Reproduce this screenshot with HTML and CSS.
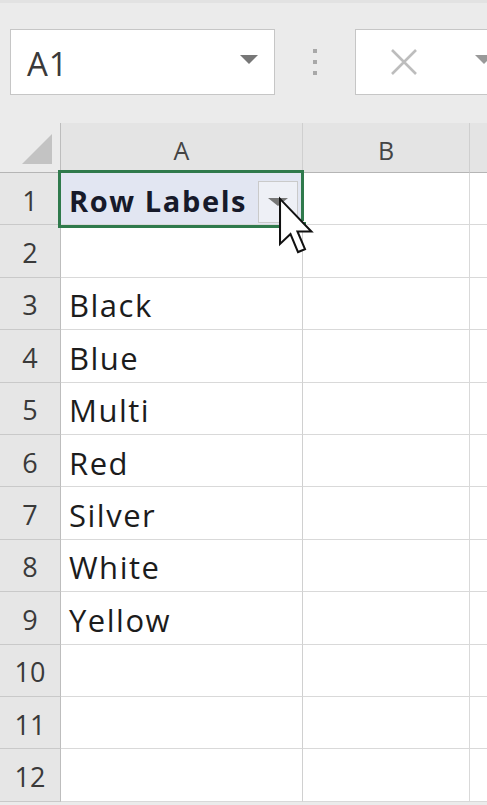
FILE: index.html
```html
<!DOCTYPE html>
<html>
<head>
<meta charset="utf-8">
<link rel="stylesheet" href="styles.css">
</head>
<body>
<div class="toolbar">
  <div class="namebox">
    <span class="ref">A1</span>
    <span class="caret"></span>
  </div>
  <div class="dots"><i></i><i></i><i></i></div>
  <div class="fbox">
    <svg class="xicon" width="30" height="28" viewBox="0 0 30 28"><path d="M3 2 L27 26 M27 2 L3 26" stroke="#bdbdbd" stroke-width="2.6" fill="none"/></svg>
    <span class="caret small"></span>
  </div>
</div>
<div class="sheet">
  <div class="corner"><span class="tri"></span></div>
  <div class="colh">A</div>
  <div class="colh">B</div>
  <div class="colh last"></div>

  <div class="rowh">1</div>
  <div class="cell a1"><b>Row Labels</b><span class="dd"><span class="ddtri"></span></span><span class="sel"><span class="handle"></span></span></div>
  <div class="cell"></div><div class="cell last"></div>

  <div class="rowh">2</div><div class="cell a"></div><div class="cell"></div><div class="cell last"></div>
  <div class="rowh">3</div><div class="cell a">Black</div><div class="cell"></div><div class="cell last"></div>
  <div class="rowh">4</div><div class="cell a">Blue</div><div class="cell"></div><div class="cell last"></div>
  <div class="rowh">5</div><div class="cell a">Multi</div><div class="cell"></div><div class="cell last"></div>
  <div class="rowh">6</div><div class="cell a">Red</div><div class="cell"></div><div class="cell last"></div>
  <div class="rowh">7</div><div class="cell a">Silver</div><div class="cell"></div><div class="cell last"></div>
  <div class="rowh">8</div><div class="cell a">White</div><div class="cell"></div><div class="cell last"></div>
  <div class="rowh">9</div><div class="cell a">Yellow</div><div class="cell"></div><div class="cell last"></div>
  <div class="rowh">10</div><div class="cell a"></div><div class="cell"></div><div class="cell last"></div>
  <div class="rowh">11</div><div class="cell a"></div><div class="cell"></div><div class="cell last"></div>
  <div class="rowh">12</div><div class="cell a"></div><div class="cell"></div><div class="cell last"></div>
</div>
<svg class="cursor" width="38" height="61" viewBox="0 0 13 21">
  <path d="M1 1 L1 16.5 L4.6 13.1 L7.2 19.3 L9.6 18.3 L7 12.2 L11.8 12.2 Z" fill="#fff" stroke="#111" stroke-width="0.7" stroke-linejoin="miter"/>
</svg>
</body>
</html>
```
FILE: styles.css
```css
html, body {
  margin: 0;
  padding: 0;
}
body {
  width: 487px;
  height: 805px;
  overflow: hidden;
  background: #ebebeb;
  font-family: "Open Sans", "Liberation Sans", sans-serif;
  position: relative;
}
.toolbar {
  height: 123px;
  box-sizing: border-box;
  padding-top: 26px;
  padding-left: 10px;
  display: flex;
  align-items: flex-start;
  background: #ebebeb;
  border-top: 3px solid #e2e2e2;
}
.namebox {
  width: 265px;
  height: 66px;
  box-sizing: border-box;
  background: #fff;
  border: 1.5px solid #c6c6c6;
  display: flex;
  align-items: center;
  padding-left: 16px;
  padding-right: 16px;
}
.ref {
  font-size: 33px;
  letter-spacing: 1px;
  color: #3a3a3a;
  flex: 1;
  line-height: 1;
  padding-top: 2px;
}
.caret {
  width: 0;
  height: 0;
  border-left: 9px solid transparent;
  border-right: 9px solid transparent;
  border-top: 9px solid #777;
  margin-top: -6px;
}
.caret.small {
  margin-left: auto;
  margin-right: -6px;
  border-top-color: #999;
}
.dots {
  width: 80px;
  height: 66px;
  display: flex;
  flex-direction: column;
  align-items: center;
  justify-content: center;
  gap: 7px;
}
.dots i {
  display: block;
  width: 4px;
  height: 4px;
  background: #a8a8a8;
}
.fbox {
  flex: 1;
  height: 66px;
  box-sizing: border-box;
  background: #fff;
  border: 1.5px solid #c6c6c6;
  border-right: none;
  display: flex;
  align-items: center;
  padding-left: 33px;
}
.sheet {
  display: grid;
  grid-template-columns: 61px 242px 167px 17px;
  grid-template-rows: 50px repeat(12, 52.4px);
  background: #fff;
}
.corner {
  background: #ebebeb;
  border-right: 1.5px solid #bdbdbd;
  border-bottom: 1.5px solid #b5b5b5;
  position: relative;
}
.tri {
  position: absolute;
  right: 8px;
  bottom: 8px;
  width: 0;
  height: 0;
  border-left: 30px solid transparent;
  border-bottom: 30px solid #c3c3c3;
}
.colh {
  background: #e4e4e4;
  border-right: 1.5px solid #cfcfcf;
  border-bottom: 1.5px solid #b5b5b5;
  display: flex;
  align-items: center;
  justify-content: center;
  font-size: 25px;
  color: #444;
  padding-top: 4px;
  box-sizing: border-box;
}
.colh.last { border-right: none; }
.rowh {
  background: #e6e6e6;
  border-right: 1.5px solid #bdbdbd;
  border-bottom: 1.5px solid #c9c9c9;
  display: flex;
  align-items: center;
  justify-content: center;
  font-size: 27px;
  color: #3a3a3a;
  padding-top: 3px;
  box-sizing: border-box;
}
.cell {
  border-right: 1.5px solid #d9d9d9;
  border-bottom: 1.5px solid #d9d9d9;
  box-sizing: border-box;
  display: flex;
  align-items: center;
  padding-left: 8px;
  padding-top: 4px;
  font-size: 31px;
  color: #1c1c1c;
  letter-spacing: 1.5px;
}
.cell.a { border-right: 1.5px solid #d0d0d0; }
.cell.last { border-right: none; }
.a1 {
  position: relative;
  background: #e2e6f2;
  color: #171a2a;
}
.a1 b {
  font-weight: 700;
  letter-spacing: 1.6px;
  font-size: 29px;
}
.dd {
  position: absolute;
  right: 4px;
  top: 8px;
  width: 40px;
  height: 42px;
  box-sizing: border-box;
  border: 1.5px solid #cacaca;
  background: #eef0f6;
  display: flex;
  align-items: center;
  justify-content: center;
}
.ddtri {
  width: 0;
  height: 0;
  border-left: 10px solid transparent;
  border-right: 10px solid transparent;
  border-top: 8px solid #777;
}
.sel {
  position: absolute;
  left: -3px;
  top: -3px;
  right: -2px;
  bottom: -4px;
  border: 3px solid #2f7a4c;
}
.handle {
  position: absolute;
  right: -6px;
  bottom: -6px;
  width: 8px;
  height: 8px;
  background: #2f7a4c;
  border: 1px solid #fff;
}
.cursor {
  position: absolute;
  left: 277px;
  top: 196px;
}
```
